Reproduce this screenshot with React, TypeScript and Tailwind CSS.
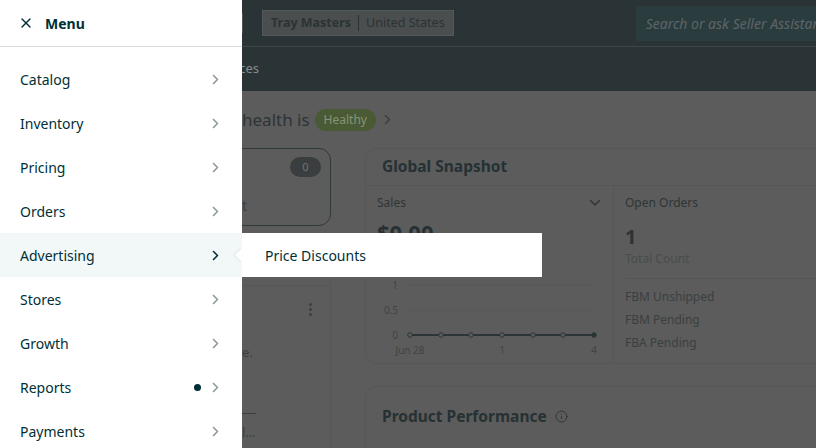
import { Info, X } from 'lucide-react';

const FONT = { fontFamily: '"Noto Sans", "Open Sans", Arial, sans-serif' };

const menuItems = [
  'Catalog',
  'Inventory',
  'Pricing',
  'Orders',
  'Advertising',
  'Stores',
  'Growth',
  'Reports',
  'Payments',
];

function Chevron({ className }: { className?: string }) {
  return (
    <svg width="8" height="11" viewBox="0 0 8 11" fill="none" className={className}>
      <path d="M1.5 1.5 L5.5 5.5 L1.5 9.5" stroke="currentColor" strokeWidth="1.6" strokeLinecap="round" strokeLinejoin="round" />
    </svg>
  );
}

function SalesChart() {
  const xs = [44, 75, 105, 136, 167, 197, 228];
  return (
    <svg width="248" height="80" viewBox="0 0 248 80" className="block">
      {/* grid */}
      <line x1="37" y1="6" x2="229" y2="6" stroke="#555a5b" strokeWidth="1" />
      <line x1="37" y1="31" x2="229" y2="31" stroke="#555a5b" strokeWidth="1" />
      <text x="32" y="10" textAnchor="end" fontSize="10" fill="#3e4445" style={FONT}>1</text>
      <text x="32" y="35" textAnchor="end" fontSize="10" fill="#3e4445" style={FONT}>0.5</text>
      <text x="32" y="60" textAnchor="end" fontSize="10" fill="#3e4445" style={FONT}>0</text>
      <line x1="44" y1="56" x2="228" y2="56" stroke="#2b3537" strokeWidth="2" />
      {xs.map((x, i) => (
        <circle
          key={x}
          cx={x}
          cy="56"
          r="2.3"
          fill={i === xs.length - 1 ? '#2b3537' : '#5c5c5c'}
          stroke="#2b3537"
          strokeWidth="1"
        />
      ))}
      <text x="44" y="75" textAnchor="middle" fontSize="10" fill="#3e4445" style={FONT}>Jun 28</text>
      <text x="136" y="75" textAnchor="middle" fontSize="10" fill="#3e4445" style={FONT}>1</text>
      <text x="228" y="75" textAnchor="middle" fontSize="10" fill="#3e4445" style={FONT}>4</text>
    </svg>
  );
}

// Dimmed dashboard that sits behind the menu drawer
function Dashboard() {
  return (
    <div className="flex flex-col w-[1100px]">
      {/* top bar */}
      <div className="h-[47px] bg-[#2a3335] border-b border-[#3e4648] flex items-center">
        <div className="w-[243px] h-full flex items-center justify-end">
          <div className="w-px h-[20px] bg-[#4c5456]" />
        </div>
        <div className="ml-[19px] h-[26px] px-[8px] flex items-center bg-[#4a4e4f] border border-[#53585a] text-[12.5px] text-[#2b3335]">
          <span className="font-bold">Tray Masters</span>
          <span className="mx-[7px] w-px h-[16px] bg-[#2b3335]" />
          <span>United States</span>
        </div>
        <div className="ml-[182px] h-[35px] w-[300px] bg-[#2b3c3f] flex items-center pl-[10px]">
          <span className="italic text-[14px] text-[#5c6567]">Search or ask Seller Assistant</span>
        </div>
      </div>
      {/* nav bar */}
      <div className="h-[44px] bg-[#2a3335] flex items-center">
        <div className="w-[259px] text-right text-[13px] text-[#858c8d]">Preferences</div>
      </div>
      {/* content */}
      <div className="bg-[#5c5c5c] pl-[20px] pt-[17px]">
        <div className="flex items-center h-[23px]">
          <span className="w-[222px] shrink-0" />
          <span className="text-[17px] text-[#2e3435]">health is</span>
          <span className="ml-[5px] h-[22px] px-[9px] rounded-full bg-[#4a5a34] text-[12px] text-[#879477] flex items-center">Healthy</span>
          <Chevron className="ml-[8px] text-[#3a4042]" />
        </div>
        <div className="mt-[17px] flex gap-[34px]">
          {/* left column */}
          <div className="w-[311px] flex flex-col gap-[11px]">
            <div className="h-[78px] rounded-xl border border-[#2f393c] flex justify-between pr-[9px] pt-[8px]">
              <span className="ml-[221px] mt-[38px] text-[14px] text-[#3a4041]">t</span>
              <span className="h-[20px] w-[31px] rounded-full bg-[#3b3e3f] text-[11px] text-[#6f7374] flex items-center justify-center">0</span>
            </div>
            <div className="h-[240px] rounded-xl border border-[#555859]">
              <div className="h-[48px] border-b border-[#555859]" />
              <div className="flex justify-end pr-[18px] pt-[17px]">
                <div className="flex flex-col gap-[2px]">
                  <span className="w-[3px] h-[3px] rounded-full bg-[#3a3f40]" />
                  <span className="w-[3px] h-[3px] rounded-full bg-[#3a3f40]" />
                  <span className="w-[3px] h-[3px] rounded-full bg-[#3a3f40]" />
                </div>
              </div>
              <div className="pl-[221px] mt-[27px] text-[13px] text-[#3a4041]">e.</div>
              <div className="ml-[221px] mt-[50px] w-[14px] border-t border-[#3a4041]" />
              <div className="pl-[221px] mt-[9px] text-[13px] text-[#3a4041]">l...</div>
            </div>
          </div>
          {/* right column */}
          <div className="w-[600px] flex flex-col gap-[22px]">
            <div className="h-[216px] rounded-xl border border-[#555859] flex flex-col">
              <div className="h-[37px] border-b border-[#555859] flex items-center px-[16px]">
                <span className="text-[15.5px] font-bold text-[#263133]">Global Snapshot</span>
              </div>
              <div className="flex flex-1">
                <div className="w-[248px] border-r border-[#555859] flex flex-col">
                  <div className="flex items-center justify-between px-[11px] pt-[8px]">
                    <span className="text-[12px] text-[#2f3536]">Sales</span>
                    <svg width="12" height="8" viewBox="0 0 12 8" fill="none" className="mr-[1px]">
                      <path d="M1.5 1.5 L6 6 L10.5 1.5" stroke="#2f3536" strokeWidth="1.5" strokeLinecap="round" />
                    </svg>
                  </div>
                  <div className="px-[11px] mt-[6px] text-[22px] font-bold text-[#263133] leading-[28px]">$0.00</div>
                  <div className="mt-[33px]">
                    <SalesChart />
                  </div>
                </div>
                <div className="flex-1 flex flex-col pl-[11px] pt-[8px]">
                  <span className="text-[12px] text-[#2f3536]">Open Orders</span>
                  <span className="mt-[12px] text-[20px] font-bold leading-[26px] text-[#2b3335]">1</span>
                  <span className="text-[12px] text-[#474c4d]">Total Count</span>
                  <div className="mt-[10px] border-t border-[#525657]" />
                  <div className="mt-[9px] flex flex-col gap-[6px] text-[12px] text-[#3a4041] leading-[17px]">
                    <span>FBM Unshipped</span>
                    <span>FBM Pending</span>
                    <span>FBA Pending</span>
                  </div>
                </div>
              </div>
            </div>
            <div className="h-[120px] rounded-xl border border-[#555859] px-[16px] pt-[18px]">
              <div className="flex items-center gap-[8px]">
                <span className="text-[15.5px] font-bold text-[#263133]">Product Performance</span>
                <Info size={13} strokeWidth={1.8} className="text-[#2e3435]" />
              </div>
            </div>
          </div>
        </div>
      </div>
    </div>
  );
}

function MenuDrawer() {
  return (
    <div className="absolute left-0 top-0 w-[242px] h-full bg-white flex flex-col">
      <div className="h-[47px] border-b border-[#d5dbdb] flex items-center pl-[18px] gap-[11px] shrink-0">
        <X size={16} strokeWidth={2} className="text-[#002f36]" />
        <span className="text-[14px] font-bold text-[#002f36]">Menu</span>
      </div>
      <div className="pt-[10px] flex flex-col">
        {menuItems.map((item) => {
          const active = item === 'Advertising';
          return (
            <div
              key={item}
              className={`h-[44px] shrink-0 flex items-center pl-[20px] pr-[22px] ${active ? 'bg-[#f2f8f8]' : ''}`}
            >
              <span className="flex-1 text-[14px] text-[#002f36]">{item}</span>
              {item === 'Reports' && <span className="w-[7px] h-[7px] rounded-full bg-[#002f36] mr-[11px]" />}
              <Chevron className={active ? 'text-[#002f36]' : 'text-[#8c9799]'} />
            </div>
          );
        })}
      </div>
    </div>
  );
}

export default function App() {
  return (
    <div className="relative w-[816px] h-[448px] overflow-hidden bg-[#5c5c5c]" style={FONT}>
      <Dashboard />
      <MenuDrawer />
      {/* flyout for Advertising */}
      <div className="absolute left-[242px] top-[233px] w-[300px] h-[44px] bg-white flex items-center pl-[23px]">
        <div className="absolute left-[-5px] top-[17px] w-[10px] h-[10px] rotate-45 bg-white shadow-[-1px_1px_2px_rgba(0,0,0,0.08)]" />
        <span className="relative text-[14px] text-[#002f36]">Price Discounts</span>
      </div>
    </div>
  );
}
